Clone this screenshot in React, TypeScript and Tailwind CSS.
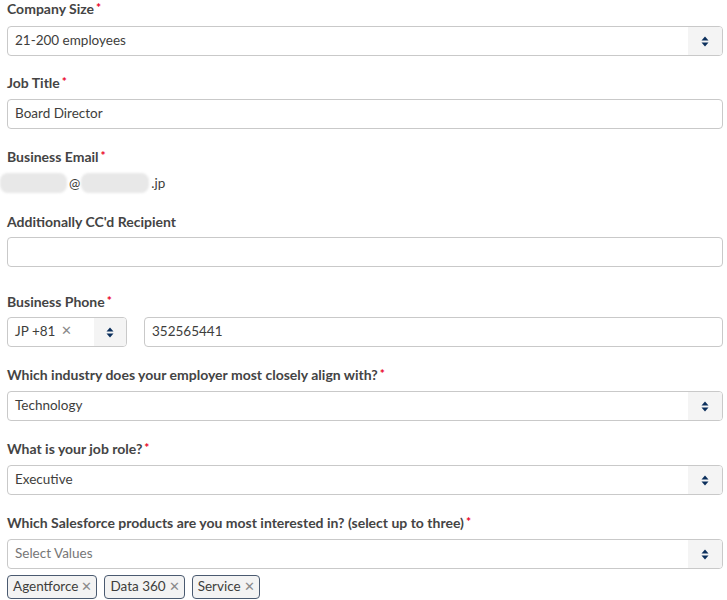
import React from "react";

const Arrows = () => (
  <svg width="8" height="11" viewBox="0 0 8 11" className="block">
    <path d="M4 0.5 L7.5 4.5 L0.5 4.5 Z" fill="#0b2f5c" />
    <path d="M0.5 6.5 L7.5 6.5 L4 10.5 Z" fill="#0b2f5c" />
  </svg>
);

const Label = ({ text, req = true, cls = "" }: { text: string; req?: boolean; cls?: string }) => (
  <div className={"h-[18px] text-[14px] font-bold leading-[18px] text-[#444444] whitespace-nowrap " + cls}>
    {text}
    {req && <span className="text-[#ea001e] ml-[2px] text-[12px] inline-block h-[18px] leading-[16px] align-top">*</span>}
  </div>
);

const Select = ({ value, placeholder = false }: { value: string; placeholder?: boolean }) => (
  <div className="flex h-[30px] border border-[#c9c9c9] rounded-[4px] bg-white overflow-hidden">
    <div className={"flex-1 flex items-center pl-[7px] pb-[2px] text-[13.5px] " + (placeholder ? "text-[#767676]" : "text-[#3e3e3c]")}>
      {value}
    </div>
    <div className="w-[34px] bg-[#f4f4f4] flex items-center justify-center">
      <Arrows />
    </div>
  </div>
);

const Input = ({ value = "" }: { value?: string }) => (
  <div className="flex items-center h-[30px] border border-[#c9c9c9] rounded-[4px] bg-white pl-[7px] pb-[2px] text-[13.5px] text-[#3e3e3c]">
    {value}
  </div>
);

const Tag = ({ text }: { text: string }) => (
  <div className="flex items-center h-[24px] pl-[5px] pr-[4px] pb-[1px] border border-[#4a5a70] rounded-[4px] bg-[#f3f3f3] text-[13.5px] text-[#3e3e3c]">
    {text}
    <span className="ml-[3px] text-[#8a8a8a] text-[13px]">✕</span>
  </div>
);

export default function App() {
  return (
    <div className="w-[727px] h-[600px] bg-white overflow-hidden pl-[7px] pr-[4px]" style={{ fontFamily: "Lato, 'Open Sans', sans-serif" }}>
      <Label text="Company Size" cls="mb-[8px]" />
      <Select value="21-200 employees" />
      <Label text="Job Title" cls="mt-[18px] mb-[7px]" />
      <Input value="Board Director" />
      <Label text="Business Email" cls="mt-[19px] mb-[7px]" />
      <div className="flex items-center h-[20px] text-[13.5px] text-[#3e3e3c] -ml-[7px]">
        <div className="w-[67px] h-[20px] bg-[#e8e8e8] rounded-[8px] blur-[1px]" />
        <span className="ml-[2px]">@</span>
        <div className="w-[68px] h-[20px] bg-[#e8e8e8] rounded-[8px] ml-[1px] blur-[1px]" />
        <span className="ml-[2px]">.jp</span>
      </div>
      <Label text="Additionally CC'd Recipient" req={false} cls="mt-[20px] mb-[6px]" />
      <Input />
      <Label text="Business Phone" cls="mt-[26px] mb-[6px]" />
      <div className="flex gap-[17px]">
        <div className="w-[120px] flex h-[30px] border border-[#c9c9c9] rounded-[4px] bg-white overflow-hidden">
          <div className="flex-1 flex items-center pl-[7px] pb-[2px] text-[13.5px] text-[#3e3e3c]">
            JP +81 <span className="ml-[6px] text-[#8a8a8a] text-[13px]">✕</span>
          </div>
          <div className="w-[32px] bg-[#f4f4f4] flex items-center justify-center">
            <Arrows />
          </div>
        </div>
        <div className="flex-1">
          <Input value="352565441" />
        </div>
      </div>
      <Label text="Which industry does your employer most closely align with?" cls="mt-[19px] mb-[7px]" />
      <Select value="Technology" />
      <Label text="What is your job role?" cls="mt-[19px] mb-[7px]" />
      <Select value="Executive" />
      <Label text="Which Salesforce products are you most interested in? (select up to three)" cls="mt-[19px] mb-[7px]" />
      <Select value="Select Values" placeholder />
      <div className="flex gap-[7px] mt-[6px]">
        <Tag text="Agentforce" />
        <Tag text="Data 360" />
        <Tag text="Service" />
      </div>
    </div>
  );
}
